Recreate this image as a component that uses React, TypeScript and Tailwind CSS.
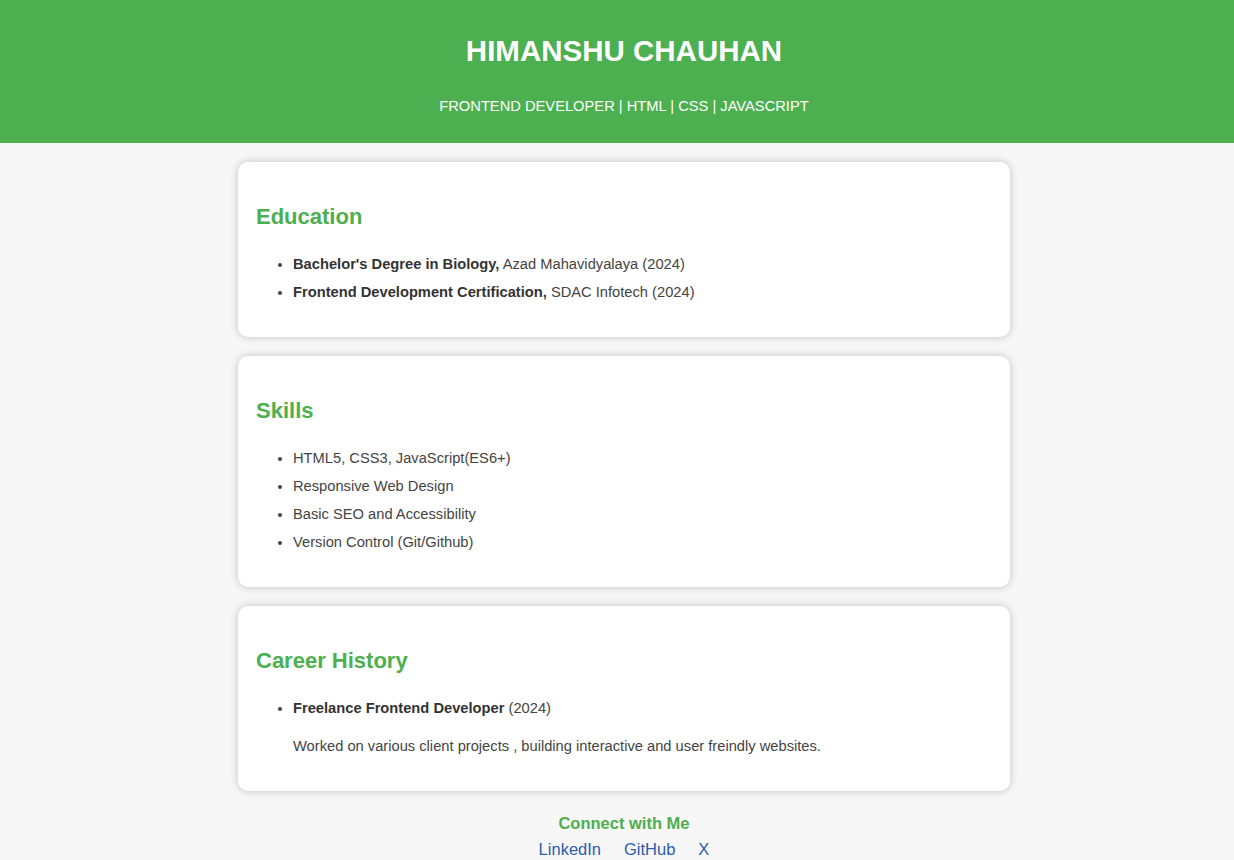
import React from 'react';

const education = [
  { title: "Bachelor's Degree in Biology,", rest: ' Azad Mahavidyalaya (2024)' },
  { title: 'Frontend Development Certification,', rest: ' SDAC Infotech (2024)' },
];

const skills = [
  'HTML5, CSS3, JavaScript(ES6+)',
  'Responsive Web Design',
  'Basic SEO and Accessibility',
  'Version Control (Git/Github)',
];

const Card: React.FC<{ title: string; children: React.ReactNode }> = ({ title, children }) => (
  <section className="bg-white rounded-[10px] shadow-[0_0_8px_rgba(0,0,0,0.22)] pt-[37px] pb-[33.5px] pl-[18px] pr-[18px]">
    <h2 className="text-[22px] leading-[35px] font-bold text-[#4caf50]">{title}</h2>
    <div className="mt-[17.5px]">{children}</div>
  </section>
);

export default function App() {
  return (
    <div className="min-h-[860px] bg-[#f7f7f7] text-[#444] font-['Liberation_Sans',Arial,sans-serif]">
      {/* Header */}
      <header className="bg-[#4caf50] text-white text-center pl-[14px] pt-[28px] pb-[25px]">
        <h1 className="text-[29.5px] leading-[45px] font-bold">HIMANSHU CHAUHAN</h1>
        <p className="mt-[21px] text-[14.7px] leading-[24px]">FRONTEND DEVELOPER | HTML | CSS | JAVASCRIPT</p>
      </header>

      <main className="ml-[238px] w-[772px] pt-[19px] flex flex-col gap-[19px]">
        <Card title="Education">
          <ul className="list-disc pl-[37px] text-[14.7px] leading-[24px] flex flex-col gap-[4px]">
            {education.map((e) => (
              <li key={e.title}>
                <strong className="font-bold text-[#333]">{e.title}</strong>
                {e.rest}
              </li>
            ))}
          </ul>
        </Card>

        <Card title="Skills">
          <ul className="list-disc pl-[37px] text-[14.7px] leading-[24px] flex flex-col gap-[4px]">
            {skills.map((s) => (
              <li key={s}>{s}</li>
            ))}
          </ul>
        </Card>

        <Card title="Career History">
          <ul className="list-disc pl-[37px] text-[14.7px] leading-[24px]">
            <li>
              <strong className="font-bold text-[#333]">Freelance Frontend Developer</strong> (2024)
              <p className="mt-[14px]">Worked on various client projects , building interactive and user freindly websites.</p>
            </li>
          </ul>
        </Card>
      </main>

      {/* Footer */}
      <footer className="pl-[14px] pt-[20px] text-center">
        <p className="text-[16.5px] leading-[24px] font-bold text-[#4caf50]">Connect with Me</p>
        <div className="flex justify-center gap-[23px] text-[16.5px] leading-[28px] text-[#2a5db0]">
          <a href="#">LinkedIn</a>
          <a href="#">GitHub</a>
          <a href="#">X</a>
        </div>
      </footer>
    </div>
  );
}
